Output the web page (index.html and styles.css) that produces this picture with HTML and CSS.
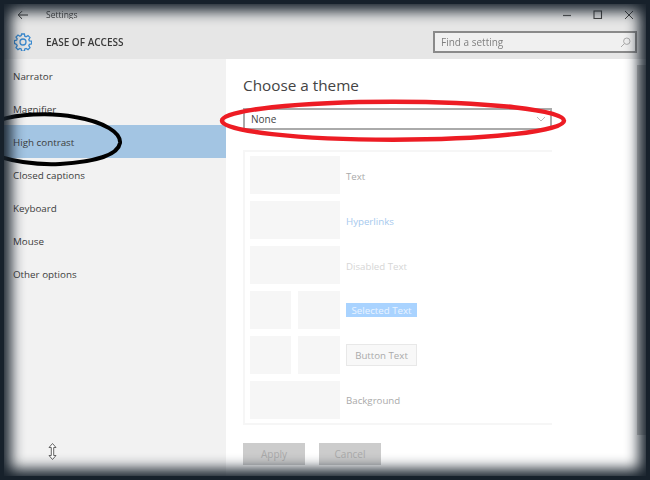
FILE: index.html
```html
<!DOCTYPE html>
<html lang="en">
<head>
<meta charset="utf-8">
<title>Settings</title>
<link rel="stylesheet" href="styles.css">
</head>
<body>
<div class="window">
  <div class="titlebar">
    <svg class="back" width="12" height="10" viewBox="0 0 12 10"><path d="M11 5H1.500M5 1.200L1.200 5 5 8.800" fill="none" stroke="#333" stroke-width="1"/></svg>
    <span class="title">Settings</span>
    <div class="controls">
      <svg width="10" height="10" viewBox="0 0 10 10"><path d="M1 5.500H9" stroke="#555" stroke-width="1.200"/></svg>
      <svg width="10" height="10" viewBox="0 0 10 10"><rect x="1" y="1" width="7.500" height="7.500" fill="none" stroke="#444" stroke-width="1.100"/></svg>
      <svg width="10" height="10" viewBox="0 0 10 10"><path d="M1 1L9 9M9 1L1 9" stroke="#444" stroke-width="1"/></svg>
    </div>
  </div>
  <header class="header">
    <svg class="gear" width="18" height="18" viewBox="0 0 18 18"><path d="M7.600 1h2.800l.4 2.200 1.300.6 1.900-1.200 2 2-1.200 1.900.6 1.300 2.200.4v2.800l-2.200.4-.6 1.300 1.200 1.900-2 2-1.900-1.200-1.300.6-.4 2.200H7.600l-.4-2.200-1.300-.6-1.900 1.200-2-2 1.200-1.900-.6-1.300L.4 10.400V7.600l2.200-.4.6-1.300L2 4l2-2 1.900 1.200 1.300-.6z" fill="none" stroke="#3a8ad0" stroke-width="1.300"/><circle cx="9" cy="9" r="3" fill="none" stroke="#3a8ad0" stroke-width="1.300"/></svg>
    <h1 class="section">EASE OF ACCESS</h1>
    <div class="search">
      <span>Find a setting</span>
      <svg width="11" height="11" viewBox="0 0 11 11"><circle cx="6.800" cy="4.200" r="3.200" fill="none" stroke="#aaa"/><path d="M4.500 6.500L1 10" stroke="#aaa"/></svg>
    </div>
  </header>
  <div class="body">
    <nav class="nav">
      <div class="nav-item">Narrator</div>
      <div class="nav-item">Magnifier</div>
      <div class="nav-item active">High contrast</div>
      <div class="nav-item">Closed captions</div>
      <div class="nav-item">Keyboard</div>
      <div class="nav-item">Mouse</div>
      <div class="nav-item">Other options</div>
    </nav>
    <main class="main">
      <h2 class="heading">Choose a theme</h2>
      <div class="dropdown">
        <span>None</span>
        <svg width="10" height="6" viewBox="0 0 10 6"><path d="M1 1l4 4 4-4" fill="none" stroke="#bbb"/></svg>
      </div>
      <div class="preview">
        <div class="row"><div class="swatch"></div><span class="label">Text</span></div>
        <div class="row"><div class="swatch"></div><span class="label link">Hyperlinks</span></div>
        <div class="row"><div class="swatch"></div><span class="label disabled">Disabled Text</span></div>
        <div class="row"><div class="swatch split"><i></i><i></i></div><span class="label selected">Selected Text</span></div>
        <div class="row"><div class="swatch split"><i></i><i></i></div><span class="label btn-text">Button Text</span></div>
        <div class="row"><div class="swatch"></div><span class="label bg">Background</span></div>
      </div>
      <div class="actions">
        <div class="action">Apply</div>
        <div class="action">Cancel</div>
      </div>
    </main>
    <div class="scrollbar"><div class="thumb"></div></div>
  </div>
</div>
<svg class="cursor" width="9" height="17" viewBox="0 0 9 17"><path d="M4.500 .5L8 4.500H5.700V12.500H8L4.500 16.500 1 12.500H3.300V4.500H1z" fill="#fff" stroke="#555" stroke-width=".9"/></svg>
<svg class="marks" width="650" height="480" viewBox="0 0 650 480">
  <path d="M-3 121C15 114 50 112 75 117C105 122 121 133 120 143C118 155 95 162 60 164C35 165 15 162 -3 156" fill="none" stroke="#000" stroke-width="4"/>
  <ellipse cx="393" cy="120.700" rx="171" ry="19" fill="none" stroke="#ed1c24" stroke-width="4.500"/>
</svg>
<div class="vignette"></div>
</body>
</html>
```
FILE: styles.css
```css
* { box-sizing: border-box; }
html, body { margin: 0; height: 100%; }
body { width: 650px; height: 480px; overflow: hidden; position: relative; background: #fff; font-family: "Open Sans", "Noto Sans", sans-serif; font-size: 10px; color: #333; }
.window { width: 650px; height: 480px; display: flex; flex-direction: column; filter: blur(.35px); }
.titlebar { height: 19px; flex: none; display: flex; align-items: center; background: #e6e6e6; padding: 10px 16px 0 17px; }
.back { flex: none; }
.title { margin-left: 17px; font-size: 8.500px; color: #444; }
.controls { margin-left: auto; display: flex; gap: 21px; }
.header { height: 40px; flex: none; background: #e6e6e6; display: flex; align-items: center; padding: 6px 13px 0 14px; }
.gear { flex: none; }
.section { margin: 0 0 0 14px; font-size: 10px; font-weight: 600; color: #3a3a3a; }
.search { margin-left: auto; width: 204px; height: 22px; border: 2px solid #8a8a8a; background: #f0f0f0; display: flex; align-items: center; justify-content: space-between; padding: 0 4px 0 6px; font-size: 10px; color: #808080; }
.body { flex: 1; display: flex; min-height: 0; }
.nav { width: 226px; flex: none; background: #f2f2f2; }
.nav-item { height: 33px; padding: 2px 0 0 13px; display: flex; align-items: center; font-size: 9.800px; color: #3c3c3c; }
.active { background: #a3c5e3; }
.main { flex: 1; background: #fff; padding: 15px 0 0 17px; }
.heading { margin: 0; font-size: 15.300px; font-weight: 400; color: #444; line-height: 22px; }
.dropdown { margin-top: 12px; width: 309px; height: 22px; border: 2px solid #aaa; display: flex; align-items: center; justify-content: space-between; padding: 0 4px 0 6px; font-size: 10px; color: #444; }
.preview { margin-top: 20px; width: 309px; height: 275px; border: solid #f6f6f6; border-width: 2px 0 2px 2px; padding: 4px 0 0 5px; display: flex; flex-direction: column; gap: 7px; }
.row { display: flex; align-items: center; gap: 6px; height: 38px; color: #aaa; }
.label { font-size: 9.700px; padding-top: 2px; }
.bg { padding-top: 0; }
.swatch { width: 90px; height: 38px; background: #f6f6f6; flex: none; }
.split { background: none; display: flex; gap: 7px; }
.split i { flex: 1; background: #f6f6f6; }
.split i:first-child { flex: none; width: 41px; }
.link { color: #a6c9ee; }
.disabled { color: #d6d6d6; }
.selected { background: #a9d3ff; color: #eaf4ff; width: 71px; height: 14px; padding-top: 0; display: flex; align-items: center; justify-content: center; }
.btn-text { background: #f8f8f8; border: 1px solid #e8e8e8; width: 71px; height: 22px; padding-top: 0; display: flex; align-items: center; justify-content: center; }
.actions { margin-top: 18px; display: flex; gap: 14px; }
.action { width: 62px; height: 22px; background: #cccccc; color: #aaa; display: flex; align-items: center; justify-content: center; font-size: 10px; }
.scrollbar { width: 13px; flex: none; background: #fff; padding-top: 6px; }
.thumb { background: #cdcdcd; height: 370px; }
.cursor { position: absolute; left: 48px; top: 443px; }
.marks { position: absolute; left: 0; top: 0; }
.vignette { position: absolute; inset: 0; pointer-events: none; box-shadow: inset 0 0 0 4px #17212b, inset 0 0 14px 11px #17212b; }
```
